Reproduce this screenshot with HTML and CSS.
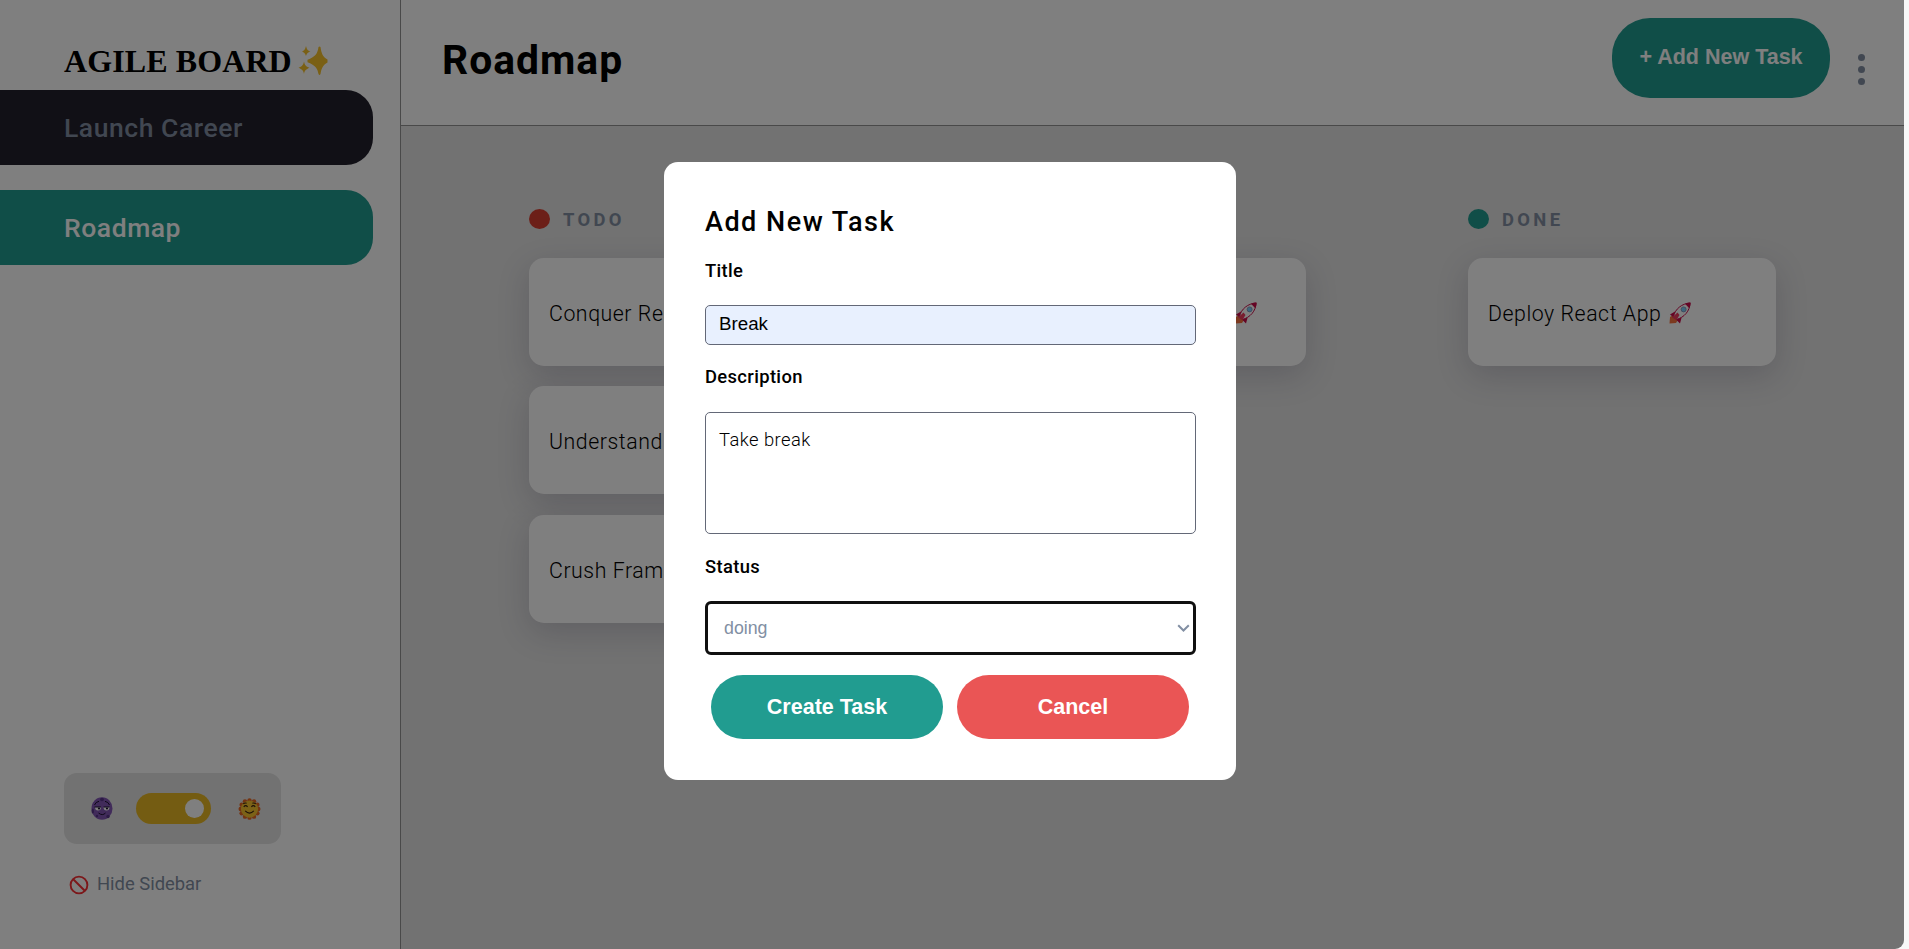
FILE: index.html
```html
<!DOCTYPE html>
<html lang="en">
<head>
<meta charset="utf-8">
<title>Agile Board</title>
<link rel="stylesheet" href="styles.css">
</head>
<body>
<svg class="defs" width="0" height="0" aria-hidden="true">
  <symbol id="rocket" viewBox="0 0 22 22">
    <path d="M1 15 5 12.5 9.5 17 7 21 0.500 21.500Z" fill="#f9723f"/>
    <path d="M1 12.500 6 9.500 12.500 16 11 21.500 7.500 18 3.500 14.500Z" fill="#ca0b4a"/>
    <path d="M4.500 14.500C6 7 13 1.500 21 1c0 8-6 14.500-13.500 16.500Z" fill="#fff" stroke="#ca0b4a" stroke-width="1"/>
    <path d="M16 1.800Q19 .600 21.700.500 21.700 3.500 20.300 6.200Z" fill="#ca0b4a"/>
    <path d="M3 15.500 8.500 10.500 10.500 13 7.500 18Z" fill="#f03a5f"/>
    <circle cx="14.600" cy="7.400" r="2.500" fill="#77cefb" stroke="#8186ad" stroke-width=".8"/>
  </symbol>
</svg>
<div class="app">
  <aside class="sidebar">
    <h1 class="logo"><span>AGILE BOARD</span>
      <svg class="sparkles" viewBox="0 0 30 30" fill="#f4c02b"><path d="M20.500 1Q21.500 0 22.500 1C23.500 8 25 11 29.500 13.500v3C25 19 23.500 22 22.500 28q-1 2-2 0C19.500 22 17 19 9.500 16.200v-2.400C17 11 19.500 8 20.500 1Z"/><path d="M8 0C9 4 10 4.500 12.500 5.500 10 6.500 9 7 8 10 7 7 6 6.500 4 5.500 6 4.500 7 4 8 0ZM6 15.500c.8 4 1.800 4.700 5.500 6.300C8 23.500 6.800 24 6 28 5.200 24 4 23.500.500 21.800 4 20.200 5.200 19.500 6 15.500Z"/></svg>
    </h1>
    <nav class="boards">
      <a class="board">Launch Career</a>
      <a class="board board-active">Roadmap</a>
    </nav>
    <div class="sidebar-foot">
      <div class="theme">
        <svg class="moon" viewBox="0 0 22 23"><ellipse cx="11" cy="11.500" rx="10.500" ry="11.200" fill="#8257b5"/><g fill="#59358a"><ellipse cx="11" cy="2.500" rx="2" ry="1.700"/><ellipse cx="1.800" cy="14" rx="1.200" ry="2.500"/><circle cx="17" cy="19.500" r="1.700"/><circle cx="6" cy="19" r="1.200"/></g><path d="M4 10h6a3 3.600 0 0 1-6 0Zm8 0H18.500a3 3.600 0 0 1-6 0Z" fill="#fff"/><path d="M3.500 8Q4.500 5 8 4.300M14 4.300Q17.500 5 18.500 8M3.500 10h6.500M12.500 10h6M7.500 16q4 3.200 7 0" fill="none" stroke="#1d1030" stroke-width="1"/><circle cx="8" cy="11.500" r="1.100" fill="#1d1030"/><circle cx="16" cy="11.500" r="1.100" fill="#1d1030"/></svg>
        <div class="switch"><span class="knob"></span></div>
        <svg class="sun" viewBox="0 0 24 24"><g fill="#e86823"><circle cx="12" cy="3" r="2.300"/><circle cx="16.700" cy="4" r="2.300"/><circle cx="20.200" cy="7.500" r="2.300"/><circle cx="21.200" cy="12" r="2.300"/><circle cx="20.200" cy="16.500" r="2.300"/><circle cx="16.700" cy="20" r="2.300"/><circle cx="12" cy="21" r="2.300"/><circle cx="7.300" cy="20" r="2.300"/><circle cx="3.800" cy="16.500" r="2.300"/><circle cx="2.800" cy="12" r="2.300"/><circle cx="3.800" cy="7.500" r="2.300"/><circle cx="7.300" cy="4" r="2.300"/></g><circle cx="12" cy="12" r="9" fill="#f8c42e"/><path d="M5.500 6.700Q7 5.200 9 6M15 6q2-.800 3.500.700M6 9.800q2-2.500 4 0M14 9.800q2-2.500 4 0M7.500 14q4.500 4.500 9 0" fill="none" stroke="#3a2210" stroke-width="1.200"/></svg>
      </div>
      <div class="hide">
        <svg class="ban" viewBox="0 0 20 20" fill="none" stroke="#f92f34" stroke-width="1.900"><circle cx="10" cy="10" r="8.400"/><path d="m4 4 12 12"/></svg>
        <span>Hide Sidebar</span>
      </div>
    </div>
  </aside>
  <main class="main">
    <header class="topbar">
      <h2 class="page-title">Roadmap</h2>
      <div class="actions">
        <button class="btn btn-add">+ Add New Task</button>
        <div class="dots"><i></i><i></i><i></i></div>
      </div>
    </header>
    <section class="columns">
      <div class="column">
        <h4 class="status"><i class="dot todo"></i><span>TODO</span></h4>
        <div class="card"><span>Conquer React</span></div>
        <div class="card"><span>Understand</span></div>
        <div class="card"><span>Crush Frame</span></div>
      </div>
      <div class="column">
        <h4 class="status"><i class="dot doing"></i></h4>
        <div class="card card-doing"><svg class="rocket"><use href="#rocket"/></svg></div>
      </div>
      <div class="column">
        <h4 class="status"><i class="dot done"></i><span>DONE</span></h4>
        <div class="card"><span>Deploy React App</span><svg class="rocket"><use href="#rocket"/></svg></div>
      </div>
    </section>
  </main>
</div>
<div class="overlay">
  <form class="modal">
    <h3 class="modal-title">Add New Task</h3>
    <label class="label label-title">Title</label>
    <div class="field field-title">Break</div>
    <label class="label label-desc">Description</label>
    <div class="field field-desc">Take break</div>
    <label class="label label-status">Status</label>
    <div class="field field-status"><span>doing</span><svg class="chevron" viewBox="0 0 13 8"><path d="m1.200 1.200 5.300 5.300 5.300-5.300" fill="none" stroke="#828fa3" stroke-width="2"/></svg></div>
    <div class="buttons">
      <button class="btn" type="button">Create Task</button>
      <button class="btn btn-cancel" type="button">Cancel</button>
    </div>
  </form>
</div>
</body>
</html>
```
FILE: styles.css
```css
* { box-sizing: border-box; }
html, body { height: 100%; }
body {
  margin: 0;
  background: #f8f8f8;
  font-family: Roboto, "Noto Sans", sans-serif;
  color: #000;
  overflow: hidden;
}
h1, h2, h3, h4 { margin: 0; font-weight: 500; }
svg { display: block; flex: none; }
.defs { position: absolute; }

.app {
  display: flex;
  width: 1904px;
  height: 949px;
  background: #e4e4e4;
  border-bottom-right-radius: 9px;
  overflow: hidden;
}

/* Sidebar */
.sidebar {
  display: flex;
  flex-direction: column;
  width: 401px;
  flex: none;
  background: #fff;
  border-right: 1px solid #929292;
}
.logo {
  display: flex;
  height: 90px;
  padding: 43px 0 0 64px;
  gap: 6px;
  font: bold 32px/36px "Liberation Serif", serif;
  letter-spacing: .100px;
}
.sparkles { width: 30px; height: 30px; margin-top: 3px; }
.boards { display: flex; flex-direction: column; gap: 25px; }
.board {
  width: 373px;
  height: 75px;
  padding-left: 64px;
  border-radius: 0 27px 27px 0;
  background: #22202d;
  color: #828fa3;
  font-size: 26.500px;
  font-weight: 500;
  line-height: 76px;
  letter-spacing: .550px;
}
.board-active { background: #219c90; color: #fff; }
.sidebar-foot { margin-top: auto; padding: 0 0 52px 64px; }
.theme {
  display: flex;
  align-items: center;
  width: 217px;
  height: 71px;
  padding-left: 27px;
  border-radius: 13px;
  background: #e4e4e4;
}
.moon { width: 22px; height: 23px; }
.sun { width: 23px; height: 24px; margin-left: 27px; }
.switch {
  display: flex;
  align-items: center;
  justify-content: flex-end;
  width: 75px;
  height: 31px;
  margin-left: 23px;
  padding-right: 7px;
  border-radius: 16px;
  background: #e9b824;
}
.knob { width: 19px; height: 19px; border-radius: 50%; background: #fff; }
.hide {
  display: flex;
  align-items: center;
  gap: 8px;
  height: 24px;
  margin-top: 29px;
  padding-left: 5px;
  color: #828fa3;
  font-size: 18.400px;
  line-height: 22px;
}
.hide span { padding-bottom: 2px; }
.ban { width: 20px; height: 20px; }

/* Header */
.main { flex: 1; }
.topbar {
  display: flex;
  justify-content: space-between;
  height: 126px;
  padding: 18px 39px 0 41px;
  background: #fff;
  border-bottom: 1px solid #929292;
}
.page-title { font-size: 40.800px; font-weight: 700; line-height: 84px; letter-spacing: 1px; }
.actions { display: flex; }
.btn {
  width: 232px;
  height: 64px;
  padding: 0;
  border: 0;
  border-radius: 38px;
  background: #219c90;
  color: #fff;
  font: bold 21.500px "Liberation Sans", sans-serif;
}
.btn-add { width: 218px; height: 80px; padding-bottom: 1px; }
.btn-cancel { background: #ea5555; }
.dots { display: flex; flex-direction: column; gap: 5px; margin: 36px 0 0 28px; }
.dots i { width: 7px; height: 7px; border-radius: 50%; background: #828fa3; }

/* Board columns */
.columns { display: flex; justify-content: space-between; padding: 81px 128px 0; }
.column { display: flex; flex-direction: column; gap: 20.400px; width: 308px; flex: none; }
.column:nth-child(2) { margin-right: 1px; }
.status {
  display: flex;
  align-items: center;
  gap: 13px;
  height: 24px;
  margin-bottom: 6.600px;
  color: #828fa3;
  font-size: 18.400px;
  font-weight: 700;
  letter-spacing: 3.350px;
}
.dot { width: 21px; height: 20px; border-radius: 50%; }
.todo { background: #d83f31; }
.doing { background: #e9b824; }
.done { background: #219c90; }
.card {
  display: flex;
  align-items: center;
  height: 108px;
  padding: 3px 20px 0;
  border-radius: 15px;
  background: #fff;
  box-shadow: 0 10px 32px rgba(54, 50, 83, .2);
  font-size: 21.300px;
  font-weight: 300;
  letter-spacing: .550px;
  white-space: nowrap;
}
.rocket { width: 22px; height: 22px; margin-left: 8px; }
.card-doing { justify-content: flex-end; padding-right: 49px; }

/* Dialog */
.overlay {
  position: fixed;
  inset: 0 5px 0 0;
  background: rgba(0, 0, 0, .5);
  border-bottom-right-radius: 9px;
  display: flex;
  justify-content: center;
  align-items: flex-start;
  padding-top: 162px;
  padding-right: 4px;
}
.modal {
  display: flex;
  flex-direction: column;
  width: 572px;
  height: 618px;
  padding: 40px 40px 0 41px;
  border-radius: 14px;
  background: #fff;
}
.modal-title { height: 40px; font-size: 27px; line-height: 40px; letter-spacing: 1.500px; }
.label { font-size: 18.400px; font-weight: 500; line-height: 24px; height: 24px; letter-spacing: .350px; }
.label-title { margin: 17px 0 22px; }
.label-desc { margin: 20px 0 23px; }
.label-status { margin: 21px 0 22px; }
.field { border: 1px solid #636877; border-radius: 5px; padding: 0 13px; }
.field-title {
  height: 40px;
  background: #e8f0fe;
  font: 18.750px/36px "Liberation Sans", sans-serif;
}
.field-desc {
  height: 122px;
  padding-top: 14px;
  font-size: 18.400px;
  font-weight: 300;
  line-height: 26px;
  letter-spacing: .450px;
}
.field-status {
  display: flex;
  justify-content: space-between;
  align-items: center;
  height: 54px;
  padding: 0 3px 0 16px;
  border: 3px solid #101010;
  border-radius: 6px;
  color: #828fa3;
  font: 17.800px "Liberation Sans", sans-serif;
}
.chevron { width: 13px; height: 8px; }
.buttons { display: flex; gap: 14px; margin: 20px 0 0 6px; }
```
